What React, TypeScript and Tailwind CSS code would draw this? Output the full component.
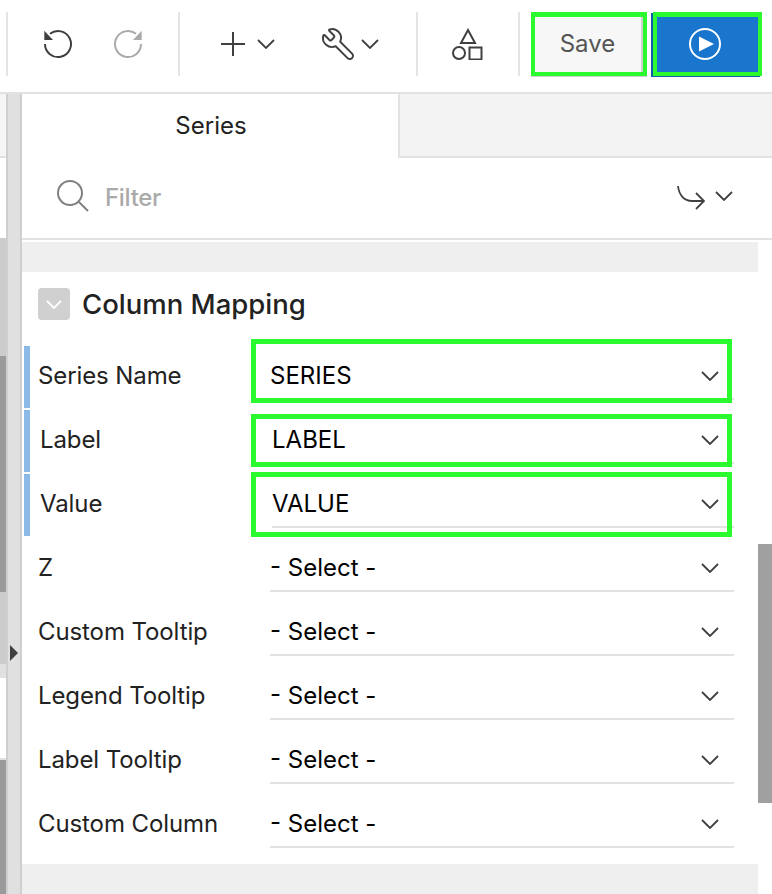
import { Wrench } from "lucide-react";

const rows = [
  { label: "Series Name", value: "SERIES", required: true, shifted: false, highlight: "-top-[5px] h-[64px]" },
  { label: "Label", value: "LABEL", required: true, shifted: true, highlight: "top-[6px] h-[53px]" },
  { label: "Value", value: "VALUE", required: true, shifted: true, highlight: "top-0 h-[65px]" },
  { label: "Z", value: "- Select -" },
  { label: "Custom Tooltip", value: "- Select -" },
  { label: "Legend Tooltip", value: "- Select -" },
  { label: "Label Tooltip", value: "- Select -" },
  { label: "Custom Column", value: "- Select -" },
];

function Chevron({ className = "" }: { className?: string }) {
  return (
    <svg width="18" height="10" viewBox="0 0 18 10" fill="none" className={className}>
      <path d="M1 1l8 8 8-8" stroke="#404040" strokeWidth="1.8" />
    </svg>
  );
}

function Divider({ className = "" }: { className?: string }) {
  return <div className={`h-16 w-0.5 shrink-0 bg-[#e4e4e4] ${className}`} />;
}

function HistoryIcon({ color, mirrored, className = "" }: { color: string; mirrored?: boolean; className?: string }) {
  return (
    <svg width="32" height="32" viewBox="0 0 32 32" fill="none" className={`${mirrored ? "-scale-x-100" : ""} ${className}`}>
      <path d="M8 5.8A13 13 0 1 1 3 16" stroke={color} strokeWidth="2" />
      <path d="M2.3 2.7V12H11z" fill={color} />
    </svg>
  );
}

export default function App() {
  return (
    <div className="flex h-[894px] w-[772px] flex-col overflow-hidden bg-white font-[Inter,sans-serif] text-[24px] text-[#222]">
      {/* Toolbar */}
      <div className="flex h-[94px] shrink-0 items-center border-b-2 border-[#e2e2e2] pb-1">
        <Divider className="ml-1.5" />
        <HistoryIcon color="#404040" className="ml-[34px]" />
        <HistoryIcon color="#aaaaaa" mirrored className="ml-[38px]" />
        <Divider className="ml-[34px]" />
        <svg width="24" height="24" viewBox="0 0 24 24" fill="none" className="ml-[41px]">
          <path d="M12 0v24M0 12h24" stroke="#404040" strokeWidth="2" />
        </svg>
        <Chevron className="ml-3" />
        <Wrench size={36} strokeWidth={1.3} color="#404040" className="ml-[45px] -scale-x-100" />
        <Chevron className="ml-[5px]" />
        <Divider className="ml-[37px]" />
        <svg width="32" height="32" viewBox="0 0 32 32" fill="none" className="ml-[33px]" stroke="#404040" strokeWidth="2">
          <path d="M17 2l7 13H10z" />
          <circle cx="8" cy="25" r="6" />
          <rect x="18.5" y="19.5" width="12" height="12" />
        </svg>
        <Divider className="ml-[35px]" />
        <button className="ml-[11px] flex h-16 w-[116px] items-center justify-center border-4 border-t-[5px] border-[#2bfb2e] bg-[#f7f7f7] pb-0.5 pr-[3px] text-[#555] shadow-[inset_-2px_0_0_#cfcfcf,0_1px_0_#cfcfcf]">
          Save
        </button>
        <button className="ml-1.5 flex h-16 w-[109px] items-center justify-center border-4 border-t-[5px] border-[#2bfb2e] bg-[#1976cc] pb-0.5 pr-[6px] shadow-[-2px_1px_0_#0f5ea8]">
          <svg width="34" height="34" viewBox="0 0 34 34" fill="none">
            <circle cx="17" cy="17" r="15" stroke="white" strokeWidth="2" />
            <path d="M11 9.5L26 17l-15 7.5z" fill="white" />
          </svg>
        </button>
      </div>

      <div className="flex min-h-0 flex-1">
        {/* Page behind the panel */}
        <div className="flex w-1.5 shrink-0 flex-col">
          <div className="h-[62px] bg-[#f5f5f5]" />
          <div className="h-0.5 bg-[#e2e2e2]" />
          <div className="h-20 bg-white" />
          <div className="h-[118px] bg-[#cccccc]" />
          <div className="h-[236px] bg-[#9a9a9a]" />
          <div className="h-[72px] bg-[#cccccc]" />
          <div className="h-[14px] bg-[#e0e0e0]" />
          <div className="h-20 bg-white" />
          <div className="h-0.5 bg-[#e0e0e0]" />
          <div className="flex-1 bg-[#9a9a9a]" />
        </div>

        {/* Splitter */}
        <div className="w-4 shrink-0 border-x-2 border-[#cfcfcf] bg-[#e0e0e0] pl-0.5 pt-[551px]">
          <svg width="8" height="16" viewBox="0 0 8 16" className="block">
            <path d="M0 0l8 8-8 8z" fill="#404040" />
          </svg>
        </div>

        {/* Panel */}
        <div className="flex min-w-0 flex-1 flex-col">
          <div className="flex h-16 shrink-0 bg-[#f3f3f3]">
            <div className="flex w-[378px] items-center justify-center border-r-2 border-[#e2e2e2] bg-white pl-0.5">
              Series
            </div>
            <div className="flex-1 border-b-2 border-[#e2e2e2]" />
          </div>

          <div className="flex h-[82px] shrink-0 items-center border-b-2 border-[#e2e2e2] pl-[33px] pr-[39px]">
            <svg width="34" height="34" viewBox="0 0 34 34" fill="none" stroke="#808080" strokeWidth="2" className="-mt-1">
              <circle cx="15" cy="14" r="12" />
              <path d="M24 23l9 9" />
            </svg>
            <span className="ml-4 font-medium text-[#aaa] tracking-[-0.3px]">Filter</span>
            <svg width="28" height="26" viewBox="0 0 28 26" fill="none" className="ml-auto" stroke="#404040" strokeWidth="1.8">
              <path d="M1 1c1 9 6 15 14 15h12M19 8l8 8-8 8" />
            </svg>
            <Chevron className="ml-[10px] -mt-1" />
          </div>

          <div className="flex min-h-0 flex-1">
            <div className="flex w-[736px] flex-col pt-0.5">
              <div className="h-[30px] bg-[#efefef]" />
              <div className="flex h-[72px] items-center pb-2 pl-4">
                <div className="flex h-8 w-8 items-center justify-center rounded bg-[#d0d0d0]">
                  <svg width="16" height="9" viewBox="0 0 16 9" fill="none">
                    <path d="M1 1l7 7 7-7" stroke="white" strokeWidth="1.8" />
                  </svg>
                </div>
                <h2 className="ml-3 mt-0.5 text-[27.5px] font-medium leading-none">Column Mapping</h2>
              </div>
              {rows.map((row) => (
                <div key={row.label} className="relative flex h-16 pl-0.5">
                  <div className={`mt-0.5 w-1.5 ${row.required ? "bg-[#8cb9e6]" : ""}`} />
                  <div className={`flex h-16 w-[240px] items-center tracking-[-0.1px] ${row.shifted ? "pl-2.5" : "pl-2"}`}>
                    {row.label}
                  </div>
                  <div
                    className={`flex h-14 items-center justify-between border-b-2 border-[#e2e2e2] pr-[15px] pt-2.5 text-black ${
                      row.shifted ? "ml-0.5 w-[462px]" : "w-[464px]"
                    }`}
                  >
                    {row.value}
                    <Chevron />
                  </div>
                  {row.highlight && (
                    <div className={`absolute left-[229px] w-[481px] border-[5px] border-[#2bfb2e] ${row.highlight}`} />
                  )}
                </div>
              ))}
              <div className="mt-2 flex-1 bg-[#efefef]" />
            </div>
            <div className="flex-1 pt-[304px]">
              <div className="h-[259px] bg-[#a0a0a0]" />
            </div>
          </div>
        </div>
      </div>
    </div>
  );
}
